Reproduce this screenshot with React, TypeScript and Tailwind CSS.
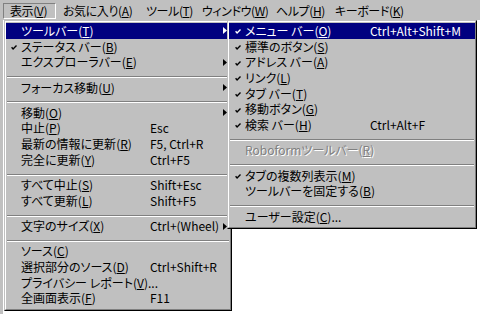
import React from "react";

type Entry =
  | "sep"
  | {
      label: string;
      hot: string;
      tail?: string;
      keys?: string;
      check?: boolean;
      sub?: boolean;
      on?: boolean;
      off?: boolean;
    };

const viewMenu: Entry[] = [
  { label: "ツールバー", hot: "T", sub: true, on: true },
  { label: "ステータス バー", hot: "B", check: true },
  { label: "エクスプローラバー", hot: "E", sub: true },
  "sep",
  { label: "フォーカス移動", hot: "U", sub: true },
  "sep",
  { label: "移動", hot: "O", sub: true },
  { label: "中止", hot: "P", keys: "Esc" },
  { label: "最新の情報に更新", hot: "R", keys: "F5, Ctrl+R" },
  { label: "完全に更新", hot: "Y", keys: "Ctrl+F5" },
  "sep",
  { label: "すべて中止", hot: "S", keys: "Shift+Esc" },
  { label: "すべて更新", hot: "L", keys: "Shift+F5" },
  "sep",
  { label: "文字のサイズ", hot: "X", keys: "Ctrl+(Wheel)", sub: true },
  "sep",
  { label: "ソース", hot: "C" },
  { label: "選択部分のソース", hot: "D", keys: "Ctrl+Shift+R" },
  { label: "プライバシー レポート", hot: "V", tail: "..." },
  { label: "全画面表示", hot: "F", keys: "F11" },
];

const toolbarMenu: Entry[] = [
  { label: "メニュー バー", hot: "O", keys: "Ctrl+Alt+Shift+M", check: true, on: true },
  { label: "標準のボタン", hot: "S", check: true },
  { label: "アドレス バー", hot: "A", check: true },
  { label: "リンク", hot: "L", check: true },
  { label: "タブ バー", hot: "T", check: true },
  { label: "移動ボタン", hot: "G", check: true },
  { label: "検索 バー", hot: "H", keys: "Ctrl+Alt+F", check: true },
  "sep",
  { label: "Roboformツールバー", hot: "R", off: true },
  "sep",
  { label: "タブの複数列表示", hot: "M", check: true },
  { label: "ツールバーを固定する", hot: "B" },
  "sep",
  { label: "ユーザー設定", hot: "C", tail: "..." },
];

const Check = ({ color }: { color: string }) => (
  <svg width="6" height="5" viewBox="0 0 6 5" className="block">
    <polyline points="0.6,2.2 2.1,3.9 5.5,0.5" fill="none" stroke={color} strokeWidth="1.4" />
  </svg>
);

const Arrow = ({ color }: { color: string }) => (
  <svg width="4" height="7" viewBox="0 0 4 7" className="block">
    <polygon points="0,0 4,3.5 0,7" fill={color} />
  </svg>
);

const Separator = () => (
  <div className="h-[9.6px] pt-[6px] px-[1px]">
    <div className="h-0 border-t border-b border-t-[#808080] border-b-white" />
  </div>
);

const Menu = ({ items, cols, checkPad }: { items: Entry[]; cols: string; checkPad: string }) => (
  <div className="border border-t-[#c0c0c0] border-l-[#c0c0c0] border-r-black border-b-black bg-[#c0c0c0]">
    <div className="border border-t-white border-l-white border-r-[#808080] border-b-[#808080] pt-[1px] pb-[3px]">
      {items.map((e, i) =>
        e === "sep" ? (
          <Separator key={i} />
        ) : (
          <div
            key={i}
            className={`grid ${cols} h-[15.7px] items-center whitespace-nowrap ${
              e.on ? "bg-[#000080] text-white" : e.off ? "text-[#808080]" : "text-black"
            }`}
          >
            <div className={`${checkPad} pt-[2px]`}>{e.check && <Check color={e.on ? "#ffffff" : "#000000"} />}</div>
            <span className={e.off ? "[text-shadow:1px_1px_0_#ffffff]" : ""}>
              {e.label}(<span className="underline underline-offset-[1px]">{e.hot}</span>){e.tail}
            </span>
            <span>{e.keys}</span>
            <div className="pl-[5px]">{e.sub && <Arrow color={e.on ? "#ffffff" : "#000000"} />}</div>
          </div>
        )
      )}
    </div>
  </div>
);

const bar = [
  { label: "お気に入り", hot: "A", w: "w-[83px]" },
  { label: "ツール", hot: "T", w: "w-[56px]" },
  { label: "ウィンドウ", hot: "W", w: "w-[74px]" },
  { label: "ヘルプ", hot: "H", w: "w-[59px]" },
  { label: "キーボード", hot: "K", w: "w-[80px]" },
];

export default function App() {
  return (
    <div className="relative w-[480px] h-[314px] overflow-hidden bg-white text-[12px] leading-none font-['Noto_Sans_CJK_JP',sans-serif] [font-feature-settings:'palt']">
      <div className="flex h-[20px] pt-[3px] pl-[3px] bg-[#c0c0c0] whitespace-nowrap tracking-[-0.4px]">
        <div className="flex shrink-0 items-center w-[53px] h-[16px] pl-[6px] border border-t-[#808080] border-l-[#808080] border-r-white border-b-white">
          表示(<span className="underline underline-offset-[1px]">V</span>)
        </div>
        {bar.map((b) => (
          <div key={b.label} className={`flex shrink-0 items-center ${b.w} h-[16px] pl-[7px]`}>
            {b.label}(<span className="underline underline-offset-[1px]">{b.hot}</span>)
          </div>
        ))}
      </div>
      <div className="flex h-[294px]">
        <div className="w-[3px] bg-[#c0c0c0]" />
        <div className="flex-1 bg-white" />
      </div>

      <div className="absolute left-[4px] top-[20px] w-[228px]">
        <Menu items={viewMenu} cols="grid-cols-[15px_129px_68px_12px]" checkPad="pl-[5px]" />
      </div>
      <div className="absolute left-[227px] top-[20px] w-[250px] z-10">
        <Menu items={toolbarMenu} cols="grid-cols-[16px_125px_95px_10px]" checkPad="pl-[6px]" />
      </div>
    </div>
  );
}
